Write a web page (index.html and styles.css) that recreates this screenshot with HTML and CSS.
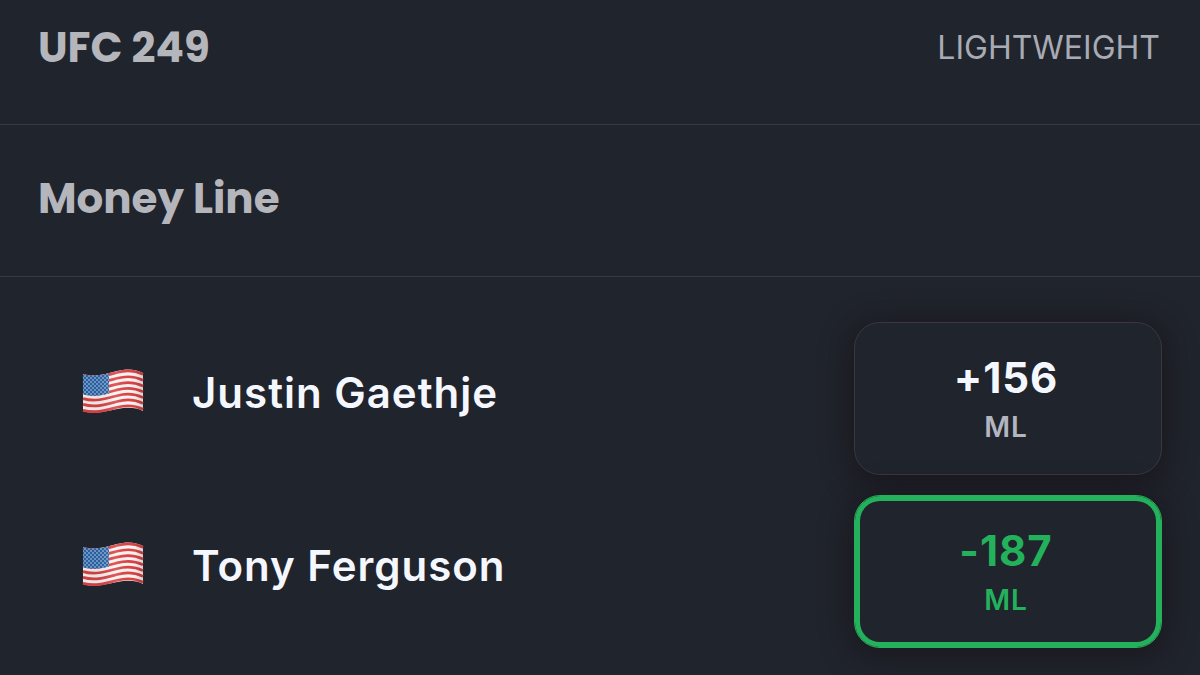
FILE: index.html
```html
<!DOCTYPE html>
<html lang="en">
<head>
    <meta charset="UTF-8">
    <meta name="viewport" content="width=device-width, initial-scale=1.0">
    <title>UFC 249 - Money Line</title>
    <link rel="stylesheet" href="styles.css">
</head>
<body>
    <!-- flag drawing, shared by the fighter rows -->
    <svg class="defs" width="0" height="0" aria-hidden="true">
        <defs>
            <linearGradient id="shade">
                <stop offset="0" stop-color="#000" stop-opacity="0.06"/>
                <stop offset="0.25" stop-color="#000" stop-opacity="0.08"/>
                <stop offset="0.55" stop-color="#fff" stop-opacity="0.12"/>
                <stop offset="0.8" stop-color="#000" stop-opacity="0"/>
                <stop offset="1" stop-color="#000" stop-opacity="0.15"/>
            </linearGradient>
            <pattern id="stars" width="4" height="4" patternUnits="userSpaceOnUse">
                <rect width="4" height="4" fill="#2b66ac"/>
                <circle cx="1" cy="1" r="0.8" fill="#d3e8fa"/>
                <circle cx="3" cy="3" r="0.8" fill="#d3e8fa"/>
            </pattern>
            <path id="stripe" d="M1 6.4C13 10 24 6.5 35 3.5S54 2 61 5.4" fill="none" stroke="#dc4448" stroke-width="2.7"/>
        </defs>
        <symbol id="flag-us" viewBox="0 0 62 46">
            <path d="M1 5C13 8.6 24 5.1 35 2.1S54 .6 61 4V42C54 38.5 46 38 35 40.1S13 45.6 1 42Z" fill="#fff6f2"/>
            <use href="#stripe"/>
            <use href="#stripe" y="5.8"/>
            <use href="#stripe" y="11.6"/>
            <use href="#stripe" y="17.4"/>
            <use href="#stripe" y="23.2"/>
            <use href="#stripe" y="29"/>
            <use href="#stripe" y="34.8"/>
            <path d="M1 5C10 7.7 18 6.4 27 4.3V24.4C18 26.7 10 27.8 1 25.2Z" fill="url(#stars)"/>
            <path d="M1 5C13 8.6 24 5.1 35 2.1S54 .6 61 4V42C54 38.5 46 38 35 40.1S13 45.6 1 42Z" fill="url(#shade)"/>
        </symbol>
    </svg>

    <header class="event">
        <h1 class="title">UFC 249</h1>
        <span class="division">LIGHTWEIGHT</span>
    </header>

    <main>
        <div class="market">
            <h2 class="title">Money Line</h2>
        </div>

        <div class="fighters">
            <div class="fighter">
                <div class="info">
                    <svg class="flag" role="img" aria-label="United States"><use href="#flag-us"/></svg>
                    <span class="name" id="gaethje">Justin Gaethje</span>
                </div>
                <button class="odds" type="button" aria-pressed="false" aria-describedby="gaethje">
                    <span class="price">+156</span>
                    <span class="type">ML</span>
                </button>
            </div>
            <div class="fighter">
                <div class="info">
                    <svg class="flag" role="img" aria-label="United States"><use href="#flag-us"/></svg>
                    <span class="name" id="ferguson">Tony Ferguson</span>
                </div>
                <button class="odds selected" type="button" aria-pressed="true" aria-describedby="ferguson">
                    <span class="price">-187</span>
                    <span class="type">ML</span>
                </button>
            </div>
        </div>
    </main>
</body>
</html>
```
FILE: styles.css
```css
* {
    box-sizing: border-box;
}
body {
    margin: 0;
    font-family: Inter, "Liberation Sans", sans-serif;
    background-color: #20242d;
    color: #f5f7ff;
}
.defs {
    display: block;
}
.event {
    display: flex;
    justify-content: space-between;
    align-items: center;
    padding: 18px 40px 46px 38px;
    border-bottom: 1px solid #373a43;
}
.market {
    padding: 44px 40px 47px 38px;
    border-bottom: 1px solid #373a43;
}
.title {
    margin: 0;
    font-family: Poppins, Inter, sans-serif;
    font-size: 42px;
    font-weight: 700;
    line-height: 60px;
    color: #b4b6bc;
}
.division {
    font-size: 32px;
    font-weight: 400;
    line-height: 60px;
    color: #a9abb4;
}
.fighters {
    display: flex;
    flex-direction: column;
    gap: 20px;
    padding: 45px 38px 27px 82px;
}
.fighter {
    display: flex;
    justify-content: space-between;
    align-items: center;
}
.info {
    display: flex;
    align-items: center;
    gap: 48px;
    padding-bottom: 13px;
}
.flag {
    width: 62px;
    height: 46px;
}
.name {
    font-size: 42px;
    font-weight: 600;
    letter-spacing: 1px;
}
.odds {
    width: 308px;
    padding: 27px 22px 26px 18px;
    font-family: inherit;
    background-color: #20242d;
    color: #f5f7ff;
    border: 1px solid #3b363f;
    border-radius: 26px;
    box-shadow: 0 4px 28px 4px rgba(24, 18, 24, 0.7);
    cursor: pointer;
}
.price,
.type {
    display: block;
    letter-spacing: 1px;
}
.price {
    font-size: 42px;
    font-weight: 700;
    line-height: 56px;
}
.type {
    font-size: 28px;
    font-weight: 600;
    line-height: 42px;
    color: #b4b6bf;
}
.odds.selected {
    color: #23b25b;
    border-color: #23b25b;
    box-shadow: inset 0 0 0 5px #23b25b, 0 4px 28px 4px rgba(24, 18, 24, 0.7);
}
.odds.selected .type {
    color: #23b25b;
}
```
